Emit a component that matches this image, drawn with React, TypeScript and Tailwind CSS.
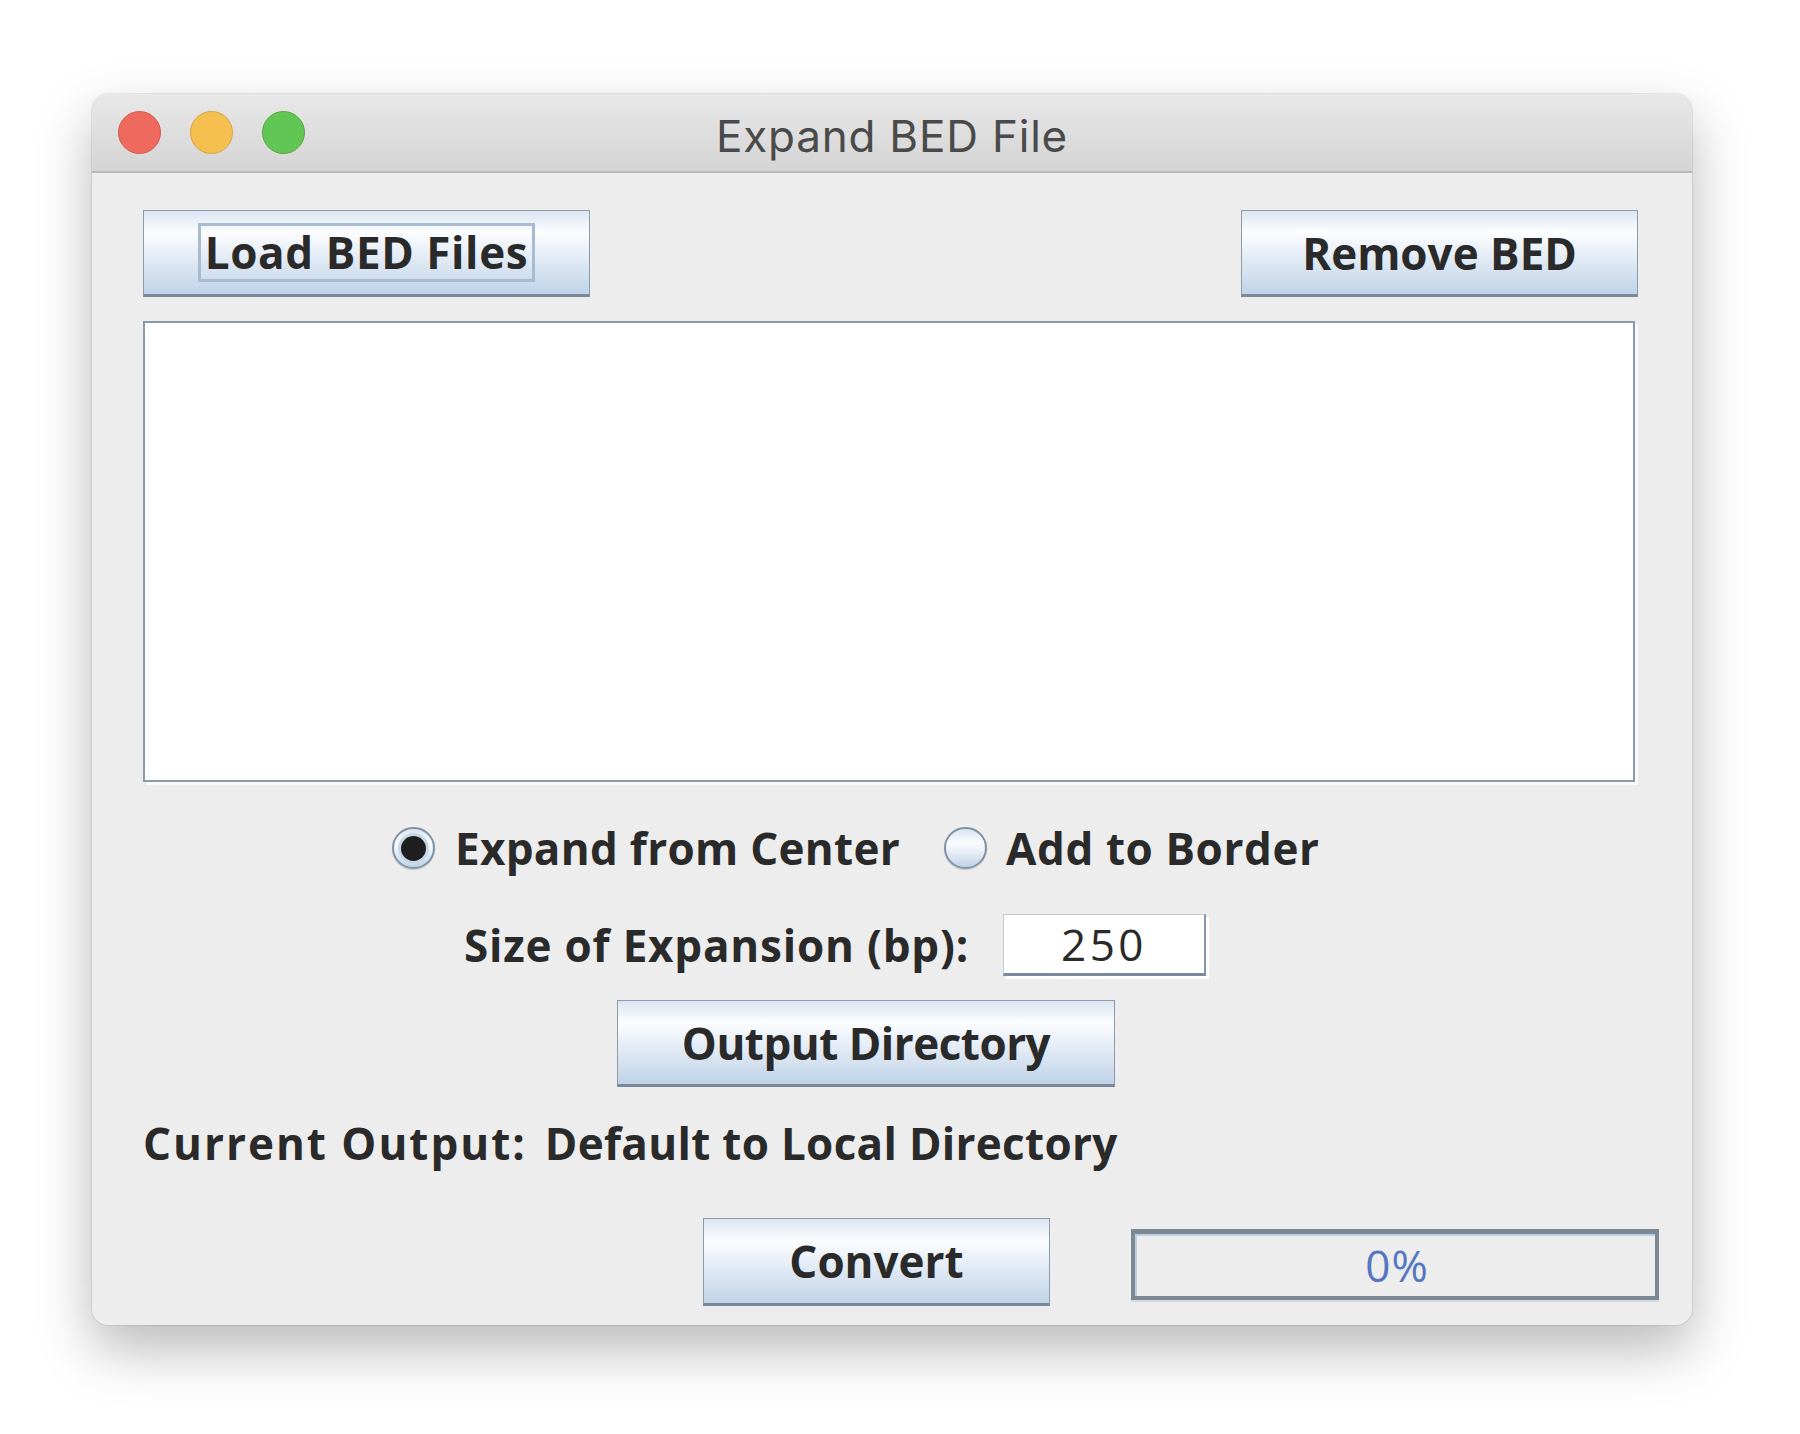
import { ReactNode } from "react";
import clsx from "clsx";

const btn =
  "flex items-center justify-center h-[87px] border border-[#8a9bae] border-b-[3px] border-b-[#7a899a] bg-[linear-gradient(180deg,#dbe5f1_0%,#fcfdff_26%,#e4ecf6_55%,#c0d3e7_100%)] text-[44px] font-bold text-[#2a2a2a]";

function AquaButton({ children, className }: { children: ReactNode; className?: string }) {
  return <button className={clsx(btn, className)}>{children}</button>;
}

function Radio({ checked }: { checked?: boolean }) {
  return (
    <span className="flex h-[42px] w-[43px] items-center justify-center rounded-full border-2 border-[#7f91a4] bg-[linear-gradient(180deg,#d7e3f0_0%,#fbfdff_35%,#e8eff7_60%,#bfd2e6_100%)] shadow-[0_1px_1px_rgba(0,0,0,0.15)]">
      {checked && <span className="h-[25px] w-[25px] rounded-full bg-[#1f1f1f] shadow-[0_0_0_3px_#c7d7e8]" />}
    </span>
  );
}

export default function App() {
  return (
    <div className="h-[1434px] w-[1800px] bg-white pl-[92px] pt-[94px] font-['Open_Sans',sans-serif] text-[#2a2a2a]">
      <div className="flex h-[1231px] w-[1600px] flex-col overflow-hidden rounded-[16px] bg-[#ededed] shadow-[0_24px_55px_rgba(0,0,0,0.28),0_0_0_1px_rgba(0,0,0,0.07)]">
        {/* title bar */}
        <div className="grid h-[79px] shrink-0 grid-cols-[1fr_auto_1fr] items-center border-b-2 border-[#b7b7b7] bg-[linear-gradient(180deg,#e8e8e8_0%,#d4d4d4_100%)] px-[26px]">
          <div className="flex gap-[29px]">
            <span className="h-[43px] w-[43px] rounded-full border border-[#d8574b] bg-[#ee6a5f]" />
            <span className="h-[43px] w-[43px] rounded-full border border-[#d9a23b] bg-[#f5bf4f]" />
            <span className="h-[43px] w-[43px] rounded-full border border-[#4fa73f] bg-[#62c655]" />
          </div>
          <span className="mt-[6px] font-['Inter',sans-serif] text-[44px] tracking-[0.8px] text-[#4a4a4a]">Expand BED File</span>
          <span />
        </div>

        {/* load / remove */}
        <div className="mt-[37px] flex justify-between pl-[51px] pr-[54px]">
          <AquaButton className="w-[447px]">
            <span className="border-[3px] border-[#a9bbcf] px-[4px] leading-[53px] tracking-[0.6px]">Load BED Files</span>
          </AquaButton>
          <AquaButton className="w-[397px]">Remove BED</AquaButton>
        </div>

        {/* file list */}
        <div className="ml-[51px] mt-[24px] h-[461px] w-[1492px] border-2 border-[#8b9aab] bg-white shadow-[3px_3px_0_#fafafa]" />

        {/* expansion mode */}
        <div className="mt-[45px] flex h-[42px] items-center pl-[300px] text-[44px] font-bold">
          <Radio checked />
          <span className="ml-[20px] tracking-[0.3px]">Expand from Center</span>
          <span className="ml-[44px]">
            <Radio />
          </span>
          <span className="ml-[19px] tracking-[0.6px]">Add to Border</span>
        </div>

        {/* size */}
        <div className="mt-[45px] flex h-[62px] items-center pl-[372px] text-[44px]">
          <span className="font-bold tracking-[0.8px]">Size of Expansion (bp):</span>
          <div className="ml-[34px] flex h-[62px] w-[203px] items-center justify-center border-l border-t border-[#c9c9c9] border-b-[3px] border-r-2 border-b-[#7b8b9c] border-r-[#8797a8] bg-white tracking-[3.5px] shadow-[3px_3px_0_#ffffff]">
            250
          </div>
        </div>

        {/* output dir */}
        <div className="mt-[24px] pl-[525px]">
          <AquaButton className="w-[498px] tracking-[-0.5px]">Output Directory</AquaButton>
        </div>

        <div className="mt-[30px] flex h-[52px] items-center gap-[18px] pl-[51px] text-[44px] font-bold">
          <span className="tracking-[2px]">Current Output:</span>
          <span className="tracking-[0.3px]">Default to Local Directory</span>
        </div>

        {/* convert + progress */}
        <div className="mt-[49px] flex items-center pl-[611px]">
          <AquaButton className="h-[88px] w-[347px]">Convert</AquaButton>
          <div className="ml-[81px] mt-[5px] flex h-[71px] w-[528px] items-center justify-center border-4 border-t-[5px] border-[#7c8894] bg-[#ededed] pl-[4px] text-[44px] font-medium tracking-[1px] text-[#5577bf] shadow-[inset_2px_2px_0_#bccfe5,0_2px_0_#d6dbe1]">
            0%
          </div>
        </div>
      </div>
    </div>
  );
}
